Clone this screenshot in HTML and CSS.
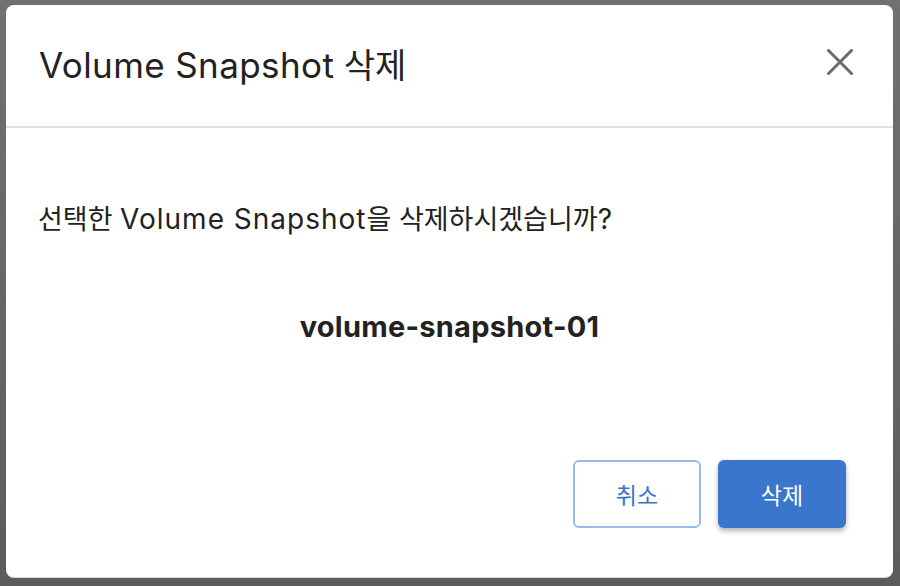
FILE: index.html
```html
<!DOCTYPE html>
<html lang="ko">
<head>
<meta charset="utf-8">
<link rel="stylesheet" href="styles.css">
</head>
<body>
<div class="dialog">
  <div class="header">
    <h1 class="title"><span class="lat">Volume Snapshot</span> 삭제</h1>
    <button class="close" aria-label="close">
      <svg width="26" height="26" viewBox="0 0 26 26"><path d="M1.5 1.5 L24.5 24.5 M24.5 1.5 L1.5 24.5" stroke="#6b6b6b" stroke-width="3" stroke-linecap="square"/></svg>
    </button>
  </div>
  <div class="content">
    <p class="question">선택한 <span class="lat">Volume Snapshot</span>을 삭제하시겠습니까<span class="lat">?</span></p>
    <p class="name">volume-snapshot-01</p>
  </div>
  <div class="actions">
    <button class="btn btn-outline">취소</button>
    <button class="btn btn-primary">삭제</button>
  </div>
</div>
</body>
</html>
```
FILE: styles.css
```css
html, body {
  margin: 0;
  height: 100%;
}
body {
  background: linear-gradient(#717171, #5c5c5c);
  font-family: "Noto Sans CJK KR", Inter, sans-serif;
  color: #222;
  padding: 5px 7px 9px 6px;
  box-sizing: border-box;
}
.lat {
  font-family: Inter, "Noto Sans CJK KR", sans-serif;
}
.dialog {
  background: #fff;
  border-radius: 8px;
  height: 572px;
  display: flex;
  flex-direction: column;
  box-shadow: 0 1px 0 #dcdcdc;
}
.header {
  height: 123px;
  border-bottom: 2px solid #e2e2e2;
  box-sizing: border-box;
  display: flex;
  align-items: center;
  justify-content: space-between;
  padding: 0 40px 0 33px;
}
.title {
  margin: 0 0 3px;
  font-weight: 400;
  font-size: 34px;
  line-height: 44px;
  color: #222;
}
.title .lat {
  font-size: 35px;
  letter-spacing: 0.4px;
}
.close {
  background: none;
  border: 0;
  padding: 0;
  width: 26px;
  height: 26px;
  margin-bottom: 8px;
}
.content {
  flex: 1;
  padding: 70px 32px 0;
}
.question {
  margin: 0;
  font-size: 27px;
  line-height: 40px;
}
.question .lat {
  font-size: 28px;
  letter-spacing: 1px;
}
.name {
  margin: 68px 0 0;
  font-family: Inter, sans-serif;
  font-size: 29px;
  letter-spacing: 0.25px;
  font-weight: 700;
  line-height: 40px;
  text-align: center;
}
.actions {
  display: flex;
  justify-content: flex-end;
  gap: 17px;
  padding: 0 47px 49px;
}
.btn {
  width: 128px;
  height: 68px;
  border-radius: 6px;
  font-family: "Noto Sans CJK KR", sans-serif;
  font-size: 23px;
}
.btn-outline {
  background: #fff;
  border: 2px solid #98bbeb;
  color: #3a74c9;
}
.btn-primary {
  background: #3a76cc;
  border: 0;
  color: #fff;
  box-shadow: 0 3px 5px rgba(0,0,0,0.3);
}
```
